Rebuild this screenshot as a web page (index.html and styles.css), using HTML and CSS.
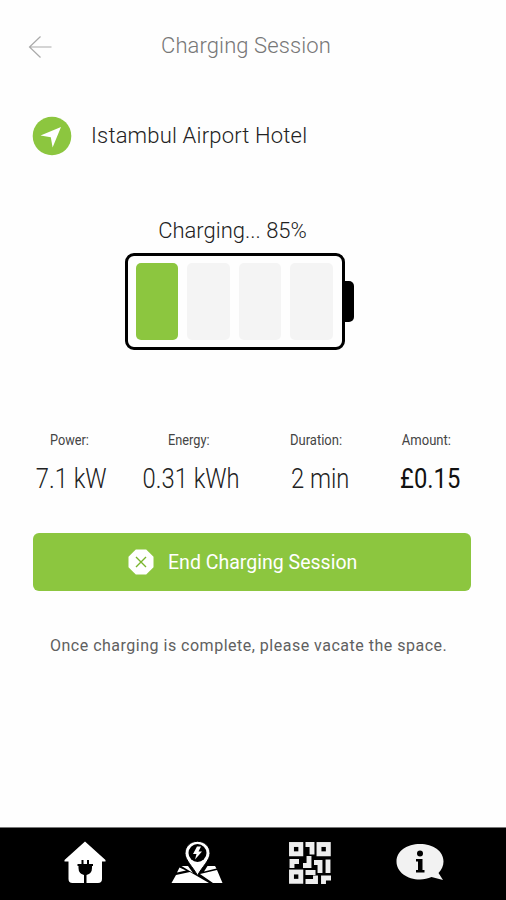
FILE: index.html
```html
<!DOCTYPE html>
<html lang="en">
    <head>
        <meta charset="utf-8">
        <title>Charging Session</title>
        <meta name="viewport" content="width=device-width">
        <link rel="stylesheet" href="styles.css">
    </head>
    <body>
        <div class="screen">
            <header class="top">
                <svg class="back" width="24" height="24" viewBox="0 0 24 24">
                    <path d="M12.500 1.500 L1.500 12 L12.500 22.500 M1.500 12 H23.500"/>
                </svg>
                <h1 class="title">Charging Session</h1>
            </header>

            <div class="place">
                <svg class="place-icon" width="40" height="40" viewBox="0 0 40 40">
                    <circle cx="20" cy="20" r="19.3" fill="#8cc63f"/>
                    <path d="M29 11 L20.6 31.5 L18.8 21.2 L8.5 19.4 Z" fill="#fff"/>
                </svg>
                <span class="place-name">Istambul Airport Hotel</span>
            </div>

            <div class="status"><span class="status-text">Charging... 85%</span></div>
            <div class="battery">
                <div class="battery-body">
                    <div class="cell full"></div>
                    <div class="cell"></div>
                    <div class="cell"></div>
                    <div class="cell"></div>
                </div>
                <div class="battery-tip"></div>
            </div>

            <div class="stats">
                <div class="stat">
                    <span class="label">Power:</span>
                    <span class="value">7.1 kW</span>
                </div>
                <div class="stat">
                    <span class="label">Energy:</span>
                    <span class="value">0.31 kWh</span>
                </div>
                <div class="stat">
                    <span class="label wide">Duration:</span>
                    <span class="value">2 min</span>
                </div>
                <div class="stat">
                    <span class="label wide">Amount:</span>
                    <span class="value amount">£0.15</span>
                </div>
            </div>

            <button class="end">
                <svg width="26" height="26" viewBox="0 0 26 26">
                    <path d="M7.8 .5 H18.2 L25.5 7.8 V18.2 L18.2 25.5 H7.8 L.5 18.2 V7.8 Z" fill="#fff"/>
                    <path d="M8 8 L18 18 M18 8 L8 18" fill="none" stroke="#79b52c" stroke-width="1.4"/>
                </svg>
                <span class="end-text">End Charging Session</span>
            </button>

            <p class="note"><span class="note-text">Once charging is complete, please vacate the space.</span></p>

            <nav class="tabs">
                <!-- home -->
                <svg width="42" height="44" viewBox="0 0 42 44">
                    <path d="M21 .5 L41.500 19 V20.500 H38 V38 Q38 42 34 42 H22.500 V34 Q28 32.500 28 27 V25 H29 V23 H13.500 V25 H14.500 V27 Q14.500 32.500 20 34 V42 H8.500 Q4.500 42 4.500 38 V20.500 H.5 V19 Z" fill="#fff"/>
                    <path d="M17.500 19 H19.500 V23.500 H17.500 Z M23 19 H25 V23.500 H23 Z" fill="#000"/>
                </svg>
                <!-- map -->
                <svg width="52" height="44" viewBox="0 0 52 44">
                    <path d="M.5 42 L5 34 L19 31 L38 42 Z M6 31.500 L8.500 26.500 L15 29.500 Z M10.500 25 H17 L22 32 Z M29 33 L46 29 L51.500 42 H42 Z M34 29 L36.500 25 H44 L45.500 27.500 L33 30.500 Z" fill="#fff"/>
                    <path d="M26.500 .3 C33.500 .3 39 5.500 39 12.300 C39 19 31 26 26.500 34.500 C22 26 14 19 14 12.300 C14 5.500 19.500 .3 26.500 .3 Z" fill="#fff" stroke="#000"/>
                    <circle cx="26.500" cy="12" r="9" fill="#000"/>
                    <path d="M26 5.500 L22 13 H25.500 L24 18.500 L31 10.500 H27.500 L30 5.500 Z" fill="#fff"/>
                </svg>
                <!-- qr -->
                <svg width="42" height="44" viewBox="0 0 42 44">
                    <g fill="none" stroke="#eee" stroke-width="4.900">
                        <rect x="2.500" y="3.500" width="9.300" height="9.300"/>
                        <rect x="30" y="3.500" width="9.300" height="9.300"/>
                        <rect x="2.500" y="31" width="9.300" height="9.300"/>
                        <path d="M16.500 3.500 H23 V13.500 M3 27 V20.500 H10 M20 15 V24.500 H14 M25 21.500 H31 V32 M39 18.500 V32 M16.500 31.500 H26.500 M16.500 40.500 H26.500 V34.500 M34.500 43 V37 H42"/>
                    </g>
                </svg>
                <!-- info -->
                <svg width="48" height="44" viewBox="0 0 48 44">
                    <path d="M24 3 C37 3 47.500 10 47.500 20.500 C47.500 25 45.500 29 42.500 32 L47 39 L35.500 36 C32 37.500 28 38.500 24 38.500 C11 38.500 .5 31 .5 20.500 C.5 10 11 3 24 3 Z" fill="#f2f2f2"/>
                    <circle cx="24" cy="12.500" r="3" fill="#000"/>
                    <path d="M20 18 H26.500 V29 H28.500 V31.500 H20 V29 H22 V20.500 H20 Z" fill="#000"/>
                </svg>
            </nav>
        </div>
    </body>
</html>
```
FILE: styles.css
```css
body {
    margin: 0;
    background: #fefefe;
    font-family: Roboto, "Liberation Sans", sans-serif;
    font-weight: 300;
    color: #222;
}
.screen {
    box-sizing: border-box;
    height: 900px;
    display: flex;
    flex-direction: column;
}

.top {
    display: flex;
    align-items: center;
    height: 30px;
    padding: 30px 0 0 28px;
}
.back {
    margin-top: 4px;
    fill: none;
    stroke: #aaa;
    stroke-width: 1.2;
}
.title {
    margin: 0 0 0 109px;
    font-size: 22px;
    font-weight: 300;
    letter-spacing: .1px;
    color: #777;
}

.place {
    display: flex;
    align-items: center;
    gap: 19px;
    height: 40px;
    margin-top: 56px;
    padding-left: 32px;
}
.place-name {
    margin-top: -2px;
    font-size: 22px;
    letter-spacing: .18px;
}

.status {
    margin-top: 62px;
    padding-right: 41px;
    height: 26px;
    line-height: 26px;
    text-align: center;
    font-size: 22px;
}

.battery {
    display: flex;
    align-items: center;
    margin: 9px 0 0 125px;
}
.battery-body {
    box-sizing: border-box;
    width: 220px;
    height: 97px;
    padding: 7px 9px 7px 7.5px;
    display: flex;
    gap: 9px;
    border: 3px solid #000;
    border-radius: 9px;
}
.cell {
    flex: 1;
    background: #f4f4f4;
    border-radius: 5px;
}
.full {
    background: #8cc63f;
}
.battery-tip {
    width: 9px;
    height: 41px;
    background: #000;
    border-radius: 0 5px 5px 0;
}

.stats {
    display: grid;
    grid-template-columns: 142px 98px 160px 60px;
    margin-top: 80px;
}
.stat {
    display: flex;
    flex-direction: column;
    align-items: center;
    white-space: nowrap;
}
.label {
    margin-right: 4px;
    font-size: 14px;
    line-height: 20px;
    font-weight: 400;
    color: #444;
    transform: scaleX(.91);
}
.wide {
    margin-right: 8px;
    transform: scaleX(.93);
}
.value {
    margin-top: 11px;
    font-size: 27px;
    line-height: 36px;
    transform: scaleX(.88);
}
.amount {
    font-weight: 400;
    color: #111;
}

.end {
    display: flex;
    align-items: center;
    gap: 14px;
    height: 58px;
    margin: 36px 35px 0 33px;
    padding: 0 0 0 95px;
    border: 0;
    border-radius: 6px;
    background: #8cc63f;
    color: #fff;
    font: 400 21px Roboto, "Liberation Sans", sans-serif;
}
.end-text {
    transform: scaleX(.93);
    transform-origin: left;
}

.note {
    margin: 45px 0 0 50px;
    font-size: 16px;
    line-height: 20px;
    font-weight: 400;
    letter-spacing: .5px;
    color: #606060;
}

.tabs {
    box-sizing: border-box;
    height: 73px;
    margin-top: auto;
    padding: 13px 62px 0 64px;
    display: flex;
    justify-content: space-between;
    background: #000;
    border-top: 1px solid #777;
}
```
